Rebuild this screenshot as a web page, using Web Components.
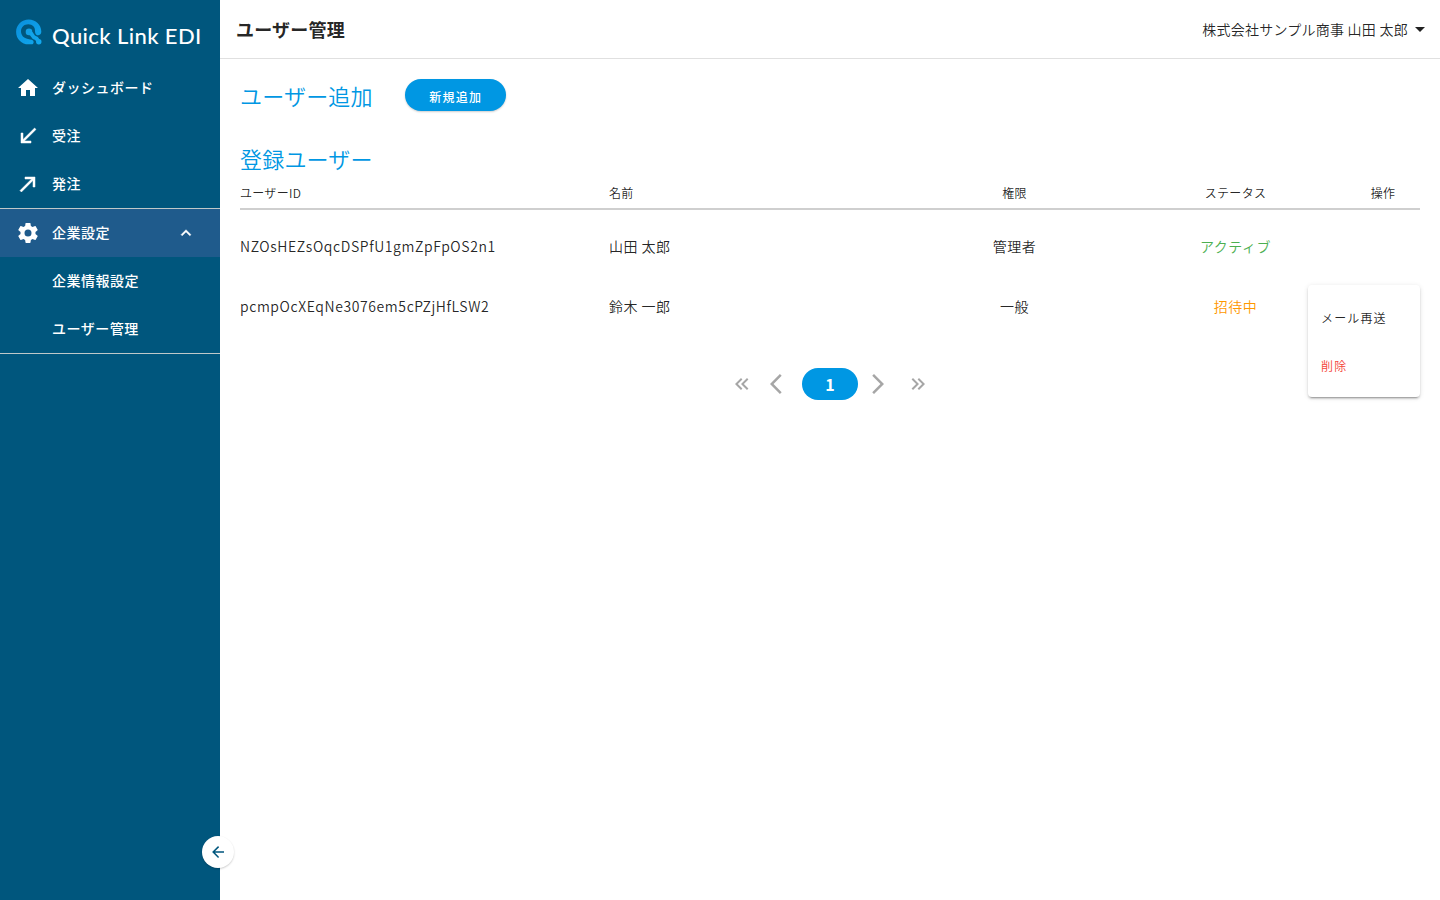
<!DOCTYPE html>
<html lang="ja">
<head>
<meta charset="UTF-8">
<title>ユーザー管理 | Quick Link EDI</title>
<style>
  body {
    margin: 0;
    font-family: "Noto Sans CJK JP", "Noto Sans", sans-serif;
    color: rgba(0, 0, 0, 0.87);
    background: #fff;
  }
</style>
</head>
<body>
<edi-app></edi-app>

<script>
const ICONS = {
  home: 'M10,20V14H14V20H19V12H22L12,3L2,12H5V20H10Z',
  in: 'M20 5.41L18.59 4 7 15.59V9H5v10h10v-2H8.41z',
  out: 'M9 5v2h6.59L4 18.59 5.41 20 17 8.41V15h2V5z',
  cog: 'M12,15.5A3.5,3.5 0 0,1 8.5,12A3.5,3.5 0 0,1 12,8.5A3.5,3.5 0 0,1 15.5,12A3.5,3.5 0 0,1 12,15.5M19.43,12.97C19.47,12.65 19.5,12.33 19.5,12C19.5,11.67 19.47,11.34 19.43,11L21.54,9.37C21.73,9.22 21.78,8.95 21.66,8.73L19.66,5.27C19.54,5.05 19.27,4.96 19.05,5.05L16.56,6.05C16.04,5.66 15.5,5.32 14.87,5.07L14.5,2.42C14.46,2.18 14.25,2 14,2H10C9.75,2 9.54,2.18 9.5,2.42L9.13,5.07C8.5,5.32 7.96,5.66 7.44,6.05L4.95,5.05C4.73,4.96 4.46,5.05 4.34,5.27L2.34,8.73C2.21,8.95 2.27,9.22 2.46,9.37L4.57,11C4.53,11.34 4.5,11.67 4.5,12C4.5,12.33 4.53,12.65 4.57,12.97L2.46,14.63C2.27,14.78 2.21,15.05 2.34,15.27L4.34,18.73C4.46,18.95 4.73,19.03 4.95,18.95L7.44,17.94C7.96,18.34 8.5,18.68 9.13,18.93L9.5,21.58C9.54,21.82 9.75,22 10,22H14C14.25,22 14.46,21.82 14.5,21.58L14.87,18.93C15.5,18.67 16.04,18.34 16.56,17.94L19.05,18.95C19.27,19.03 19.54,18.95 19.66,18.73L21.66,15.27C21.78,15.05 21.73,14.78 21.54,14.63L19.43,12.97Z',
  up: 'M7.41,15.41L12,10.83L16.59,15.41L18,14L12,8L6,14L7.41,15.41Z',
  caret: 'M7,10L12,15L17,10H7Z',
  back: 'M20,11V13H8L13.5,18.5L12.08,19.92L4.16,12L12.08,4.08L13.5,5.5L8,11H20Z',
  left: 'M11.67 3.87L9.9 2.1 0 12l9.9 9.9 1.77-1.77L3.54 12z',
  right: 'M6.23 20.23L8 22l10-10L8 2 6.23 3.77 14.46 12z',
  first: 'M18.41,7.41L17,6L11,12L17,18L18.41,16.59L13.83,12L18.41,7.41M12.41,7.41L11,6L5,12L11,18L12.41,16.59L7.83,12L12.41,7.41Z',
  last: 'M5.59,7.41L7,6L13,12L7,18L5.59,16.59L10.17,12L5.59,7.41M11.59,7.41L13,6L19,12L13,18L11.59,16.59L16.17,12L11.59,7.41Z',
};

class EdiIcon extends HTMLElement {
  constructor() {
    super();
    this.attachShadow({ mode: 'open' });
  }

  connectedCallback() {
    const size = this.getAttribute('size') || 24;
    this.shadowRoot.innerHTML = `
      <style>
        :host { display: inline-flex; flex: none; }
        svg { display: block; fill: currentColor; }
        :host([heavy]) path { stroke: currentColor; stroke-width: 0.5; }
      </style>
      <svg width="${size}" height="${size}" viewBox="0 0 24 24"><path d="${ICONS[this.getAttribute('name')]}"/></svg>
    `;
  }
}

class EdiLogo extends HTMLElement {
  constructor() {
    super();
    this.attachShadow({ mode: 'open' });
    this.shadowRoot.innerHTML = `
      <style>
        :host { display: flex; height: 64px; padding-left: 16px; box-sizing: border-box; }
        svg { flex: none; margin-top: 19px; }
        span {
          margin: 22px 0 0 9px;
          font: 500 22px/28px Lato, sans-serif;
          letter-spacing: 0.4px;
          white-space: nowrap;
          color: #fff;
        }
      </style>
      <svg width="27" height="27" viewBox="0 0 27 27">
        <defs>
          <linearGradient id="g" x1="0" y1="0" x2="1" y2="1">
            <stop offset="0" stop-color="#0a8fdc"/>
            <stop offset="1" stop-color="#10a8ee"/>
          </linearGradient>
        </defs>
        <path fill="url(#g)" d="M12.700 .6C5.900.6.1 6 .1 12.900C.1 19.900 5.700 25.300 12.500 25.300H15.500C18.300 25.300 18.300 21.400 15.800 20.700C14.800 20.400 13.500 20.400 12 20C7.800 19.200 5 16.500 5 12.300C5 8 8.200 5.200 12.300 5.200C16.600 5.200 19.400 8.200 19 12.400C19 16 22.300 17.200 24 15.600C25 14.800 25.300 13.600 25.300 12.500C25.300 5.800 19.600.6 12.700.6Z"/>
        <circle cx="13" cy="12.900" r="3.300" fill="#129fe6"/>
        <circle cx="22.800" cy="22.800" r="2.700" fill="#12a8ee"/>
        <path d="M14 14C17 15 16.300 18.300 19 18.800S21.500 21.500 22.500 22.500" fill="none" stroke="#12a4ea" stroke-width="4"/>
      </svg>
      <span>Quick Link EDI</span>
    `;
  }
}

class EdiNavItem extends HTMLElement {
  constructor() {
    super();
    this.attachShadow({ mode: 'open' });
    this.shadowRoot.innerHTML = `
      <style>
        :host {
          display: flex;
          align-items: center;
          height: 48px;
          padding: 0 24px 0 16px;
          box-sizing: border-box;
          font-size: 14px;
          font-weight: 500;
          letter-spacing: 0.5px;
          color: #fff;
        }
        :host([open]) { background: #1f5b8c; }
        .icon { display: flex; width: 24px; margin-right: 12px; }
        .label { flex: 1; padding-bottom: 2px; line-height: 20px; }
      </style>
      <div class="icon"><slot name="icon"></slot></div>
      <div class="label"><slot></slot></div>
      <slot name="append"></slot>
    `;
  }
}

class EdiSidebar extends HTMLElement {
  constructor() {
    super();
    this.attachShadow({ mode: 'open' });
    this.shadowRoot.innerHTML = `
      <style>
        :host { display: block; position: relative; width: 220px; flex: none; background: #00567d; }
        .group { border-top: 1px solid #bfc8c9; border-bottom: 1px solid #bfc8c9; }
        .collapse {
          position: absolute;
          right: -14px;
          bottom: 32px;
          display: flex;
          align-items: center;
          justify-content: center;
          width: 32px;
          height: 32px;
          border-radius: 50%;
          background: #fff;
          color: #00567d;
          box-shadow: 0 1px 2px rgba(0, 0, 0, 0.2);
        }
      </style>
      <edi-logo></edi-logo>
      <edi-nav-item><edi-icon slot="icon" name="home"></edi-icon>ダッシュボード</edi-nav-item>
      <edi-nav-item><edi-icon slot="icon" name="in" heavy></edi-icon>受注</edi-nav-item>
      <edi-nav-item><edi-icon slot="icon" name="out" heavy></edi-icon>発注</edi-nav-item>
      <div class="group">
        <edi-nav-item open>
          <edi-icon slot="icon" name="cog"></edi-icon>企業設定
          <edi-icon slot="append" name="up" size="20" heavy></edi-icon>
        </edi-nav-item>
        <edi-nav-item>企業情報設定</edi-nav-item>
        <edi-nav-item>ユーザー管理</edi-nav-item>
      </div>
      <div class="collapse"><edi-icon name="back" size="18"></edi-icon></div>
    `;
  }
}

class EdiHeader extends HTMLElement {
  constructor() {
    super();
    this.attachShadow({ mode: 'open' });
    this.shadowRoot.innerHTML = `
      <style>
        :host {
          display: flex;
          align-items: center;
          justify-content: space-between;
          height: 58px;
          padding: 0 8px 0 16px;
          border-bottom: 1px solid #e0e0e0;
        }
        h1 { margin: 0; font-size: 18px; font-weight: 700; line-height: 28px; letter-spacing: 0.2px; }
        .account { display: flex; align-items: center; font-size: 14px; font-weight: 350; letter-spacing: 0.25px; }
      </style>
      <h1><slot></slot></h1>
      <div class="account"><slot name="account"></slot><edi-icon name="caret"></edi-icon></div>
    `;
  }
}

class EdiButton extends HTMLElement {
  constructor() {
    super();
    this.attachShadow({ mode: 'open' });
    this.shadowRoot.innerHTML = `
      <style>
        :host {
          display: inline-flex;
          align-items: center;
          justify-content: center;
          box-sizing: border-box;
          width: 101px;
          height: 32px;
          padding: 2px 0 0 1px;
          border-radius: 16px;
          background: #0097e3;
          color: #fff;
          font-size: 12px;
          font-weight: 500;
          letter-spacing: 1.2px;
          box-shadow: 0 1px 2px rgba(0, 0, 0, 0.2);
        }
      </style>
      <slot></slot>
    `;
  }
}

class EdiUserTable extends HTMLElement {
  constructor() {
    super();
    this.attachShadow({ mode: 'open' });
    this.users = [
      { id: 'NZOsHEZsOqcDSPfU1gmZpFpOS2n1', name: '山田 太郎', role: '管理者', status: 'アクティブ', state: 'active' },
      { id: 'pcmpOcXEqNe3076em5cPZjHfLSW2', name: '鈴木 一郎', role: '一般', status: '招待中', state: 'invited' },
    ];
  }

  connectedCallback() {
    this.shadowRoot.innerHTML = `
      <style>
        :host { display: block; font-weight: 350; }
        .row {
          display: grid;
          grid-template-columns: 369px 295px 221px 221px 74px;
          align-items: center;
          height: 60px;
          font-size: 14px;
          letter-spacing: 0.5px;
        }
        .head {
          box-sizing: border-box;
          height: 34px;
          padding-top: 1px;
          border-bottom: 2px solid #cfcfcf;
          font-size: 12px;
          letter-spacing: 0.3px;
        }
        .rows { padding-top: 6px; }
        .id { letter-spacing: 0.6px; }
        .center { text-align: center; }
        .active { color: #4caf50; }
        .invited { color: #ff9800; }
      </style>
      <div class="row head">
        <div>ユーザーID</div><div>名前</div>
        <div class="center">権限</div><div class="center">ステータス</div><div class="center">操作</div>
      </div>
      <div class="rows">
        ${this.users.map(u => `
          <div class="row">
            <div class="id">${u.id}</div><div>${u.name}</div>
            <div class="center">${u.role}</div><div class="center ${u.state}">${u.status}</div>
          </div>
        `).join('')}
      </div>
    `;
  }
}

class EdiMenu extends HTMLElement {
  constructor() {
    super();
    this.attachShadow({ mode: 'open' });
    this.shadowRoot.innerHTML = `
      <style>
        :host {
          display: block;
          box-sizing: border-box;
          width: 112px;
          height: 112px;
          padding: 8px 13px;
          border-radius: 4px;
          background: #fff;
          font-size: 12px;
          font-weight: 350;
          letter-spacing: 1.15px;
          line-height: 50px;
          box-shadow: 0 3px 1px -2px rgba(0,0,0,.2), 0 2px 2px rgba(0,0,0,.14), 0 1px 5px rgba(0,0,0,.12);
        }
        div { height: 48px; }
        .danger { color: #f44336; }
      </style>
      <div>メール再送</div>
      <div class="danger">削除</div>
    `;
  }
}

class EdiPagination extends HTMLElement {
  constructor() {
    super();
    this.attachShadow({ mode: 'open' });
    this.shadowRoot.innerHTML = `
      <style>
        :host { display: flex; align-items: center; justify-content: center; height: 32px; color: #a6a6a6; }
        .page {
          width: 56px;
          margin: 0 8px;
          height: 32px;
          border-radius: 16px;
          background: #0097e3;
          color: #fff;
          font-size: 16px;
          font-weight: 700;
          line-height: 32px;
          text-align: center;
        }
        .first { margin-right: 16px; }
        .last { margin-left: 16px; }
      </style>
      <edi-icon class="first" name="first"></edi-icon>
      <edi-icon name="left"></edi-icon>
      <div class="page">1</div>
      <edi-icon name="right"></edi-icon>
      <edi-icon class="last" name="last"></edi-icon>
    `;
  }
}

class EdiApp extends HTMLElement {
  constructor() {
    super();
    this.attachShadow({ mode: 'open' });
    this.shadowRoot.innerHTML = `
      <style>
        :host { display: flex; height: 100vh; overflow: hidden; }
        main { flex: 1; min-width: 0; }
        .content { position: relative; padding: 20px 20px 0; }
        .add { display: flex; height: 32px; gap: 32px; }
        h2 { margin: 0; font-size: 22px; font-weight: 350; line-height: 32px; letter-spacing: 0.2px; color: #0097e3; }
        .list { margin-top: 31px; }
        edi-user-table { margin-top: 2px; }
        edi-pagination { margin-top: 32px; }
        edi-menu { position: absolute; top: 226px; right: 20px; }
      </style>
      <edi-sidebar></edi-sidebar>
      <main>
        <edi-header>ユーザー管理<span slot="account">株式会社サンプル商事 山田 太郎</span></edi-header>
        <div class="content">
          <div class="add"><h2>ユーザー追加</h2><edi-button>新規追加</edi-button></div>
          <h2 class="list">登録ユーザー</h2>
          <edi-user-table></edi-user-table>
          <edi-pagination></edi-pagination>
          <edi-menu></edi-menu>
        </div>
      </main>
    `;
  }
}

customElements.define('edi-icon', EdiIcon);
customElements.define('edi-logo', EdiLogo);
customElements.define('edi-nav-item', EdiNavItem);
customElements.define('edi-sidebar', EdiSidebar);
customElements.define('edi-header', EdiHeader);
customElements.define('edi-button', EdiButton);
customElements.define('edi-user-table', EdiUserTable);
customElements.define('edi-menu', EdiMenu);
customElements.define('edi-pagination', EdiPagination);
customElements.define('edi-app', EdiApp);
</script>
</body>
</html>
